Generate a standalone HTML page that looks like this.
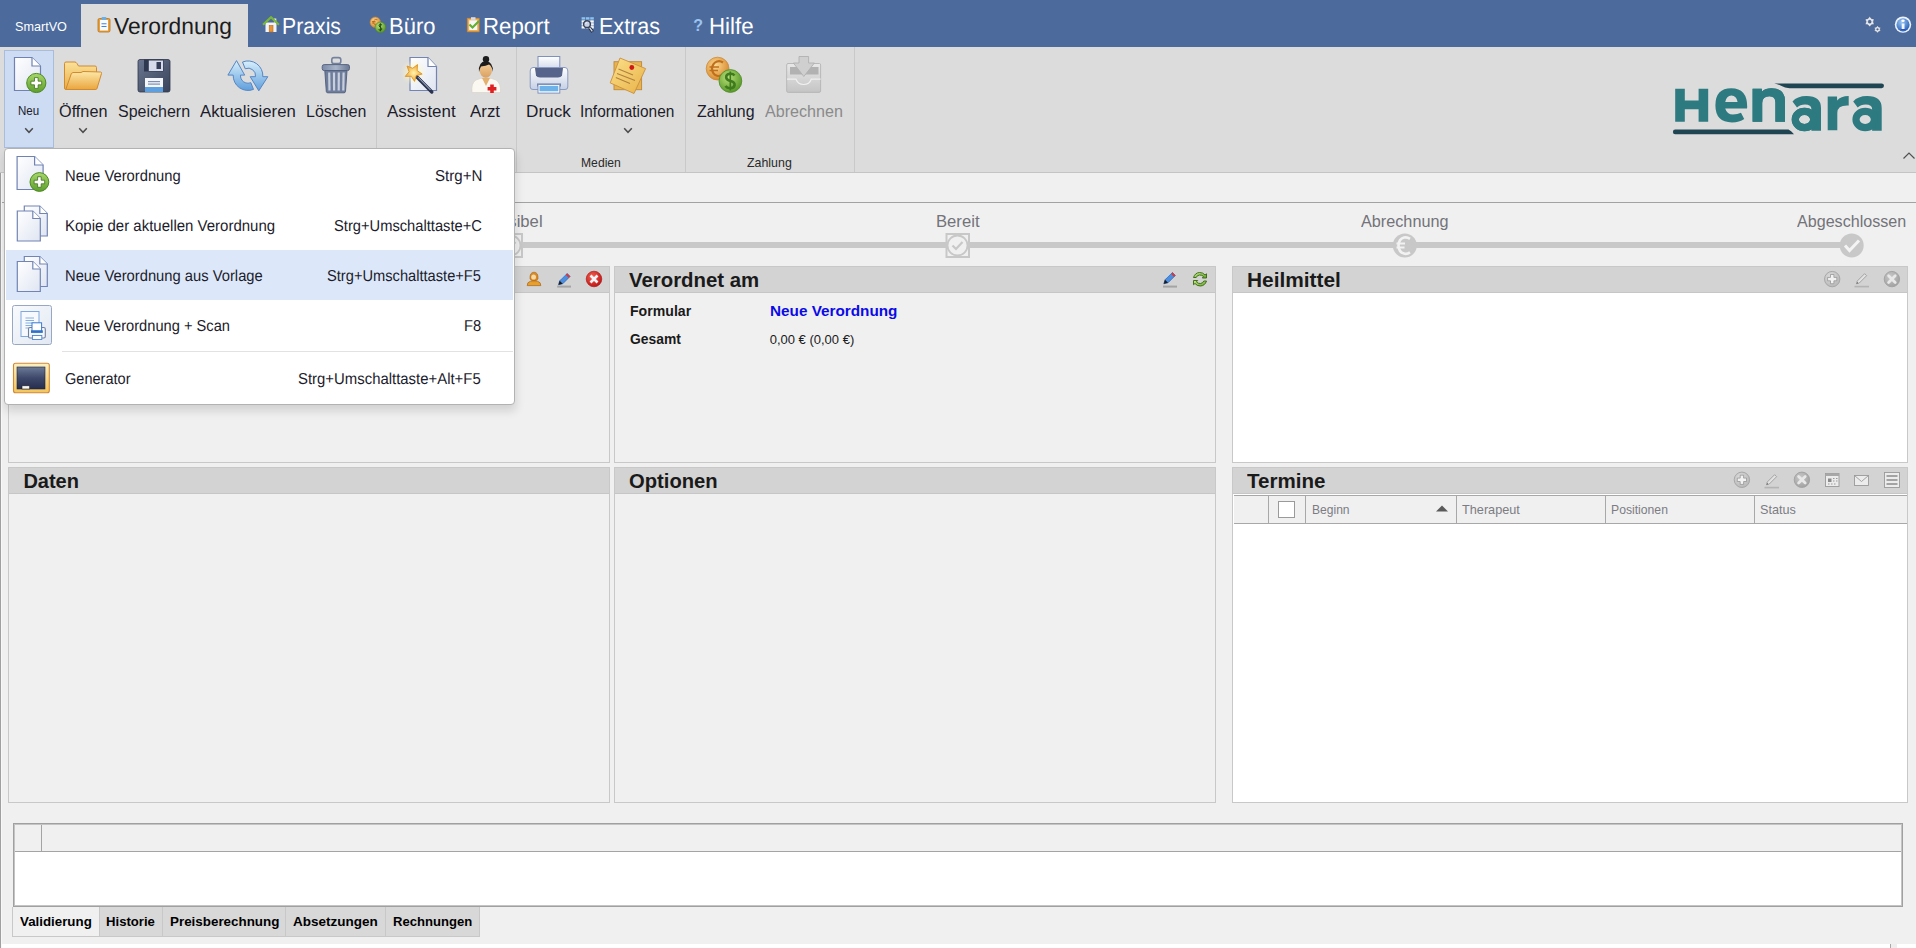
<!DOCTYPE html>
<html><head><meta charset="utf-8"><title>SmartVO</title>
<style>
html,body{margin:0;padding:0}
body{width:1916px;height:948px;overflow:hidden;position:relative;background:#f0f0f0;font-family:"Liberation Sans",sans-serif}
.a{position:absolute;box-sizing:border-box}
.t{position:absolute;font-family:"Liberation Sans",sans-serif;white-space:pre;transform-origin:0 0}
svg{position:absolute;overflow:visible}
</style></head><body>
<!-- top bar -->
<div class="a" style="left:0;top:0;width:1916px;height:47px;background:#4c6a9c"></div>
<div class="a" style="left:81px;top:4px;width:167px;height:43px;background:#dcdcdc"></div>
<!-- ribbon -->
<div class="a" style="left:0;top:47px;width:1916px;height:126px;background:#dcdcdc;border-bottom:1px solid #c4c4c4"></div>
<div class="a" style="left:4px;top:50px;width:50px;height:98px;background:#cddcf3;border:1px solid #a9bcda"></div>
<div class="a" style="left:376px;top:47px;width:1px;height:125px;background:#c9c9c9"></div>
<div class="a" style="left:516px;top:47px;width:1px;height:125px;background:#c9c9c9"></div>
<div class="a" style="left:685px;top:47px;width:1px;height:125px;background:#c9c9c9"></div>
<div class="a" style="left:854px;top:47px;width:1px;height:125px;background:#c9c9c9"></div>
<svg style="left:0;top:0" width="1916" height="948">
<defs>
 <linearGradient id="gPage" x1="0" y1="0" x2="1" y2="1"><stop offset="0" stop-color="#ffffff"/><stop offset="1" stop-color="#dfe5f2"/></linearGradient>
 <linearGradient id="gGreenR" x1="0" y1="0" x2="1" y2="1"><stop offset="0" stop-color="#c4ec86"/><stop offset="1" stop-color="#64a626"/></linearGradient><linearGradient id="gGreen" x1="0" y1="0" x2="0" y2="1"><stop offset="0" stop-color="#a8d86a"/><stop offset="1" stop-color="#5c9e2c"/></linearGradient>
 <linearGradient id="gFolderB" x1="0" y1="0" x2="0" y2="1"><stop offset="0" stop-color="#fbe29a"/><stop offset="1" stop-color="#e9ad45"/></linearGradient>
 <linearGradient id="gFolderF" x1="0" y1="0" x2="0" y2="1"><stop offset="0" stop-color="#fde7a8"/><stop offset="1" stop-color="#eaa63e"/></linearGradient>
 <linearGradient id="gFloppy" x1="0" y1="0" x2="1" y2="1"><stop offset="0" stop-color="#6a7690"/><stop offset="1" stop-color="#39435a"/></linearGradient>
 <linearGradient id="gBlueArr" x1="0" y1="0" x2="0" y2="1"><stop offset="0" stop-color="#d8effc"/><stop offset="1" stop-color="#5f9fdc"/></linearGradient>
 <linearGradient id="gTrash" x1="0" y1="0" x2="1" y2="0"><stop offset="0" stop-color="#7c8aa8"/><stop offset="0.5" stop-color="#a8b4c8"/><stop offset="1" stop-color="#6a7894"/></linearGradient>
 <radialGradient id="gStar" cx="0.5" cy="0.5" r="0.5"><stop offset="0" stop-color="#fff3b0"/><stop offset="1" stop-color="#f0a830"/></radialGradient>
 <radialGradient id="gGlow" cx="0.5" cy="0.5" r="0.5"><stop offset="0" stop-color="#fff7c0" stop-opacity="0.9"/><stop offset="1" stop-color="#fff7c0" stop-opacity="0"/></radialGradient>
 <linearGradient id="gSkin" x1="0" y1="0" x2="0" y2="1"><stop offset="0" stop-color="#f6d09a"/><stop offset="1" stop-color="#d9a060"/></linearGradient>
 <linearGradient id="gPrinter" x1="0" y1="0" x2="0" y2="1"><stop offset="0" stop-color="#ffffff"/><stop offset="1" stop-color="#c6d0e4"/></linearGradient>
 <linearGradient id="gNote" x1="0" y1="0" x2="1" y2="1"><stop offset="0" stop-color="#fbe08a"/><stop offset="1" stop-color="#e9b248"/></linearGradient>
 <radialGradient id="gEuro" cx="0.4" cy="0.35" r="0.65"><stop offset="0" stop-color="#fbd890"/><stop offset="1" stop-color="#d98a2e"/></radialGradient>
 <radialGradient id="gDollar" cx="0.4" cy="0.35" r="0.65"><stop offset="0" stop-color="#b8e078"/><stop offset="1" stop-color="#5a9a2a"/></radialGradient>
 <linearGradient id="gInbox" x1="0" y1="0" x2="0" y2="1"><stop offset="0" stop-color="#e8e8e8"/><stop offset="1" stop-color="#c4c4c4"/></linearGradient>
 <radialGradient id="gRed" cx="0.4" cy="0.35" r="0.65"><stop offset="0" stop-color="#f46050"/><stop offset="1" stop-color="#c01818"/></radialGradient>
 <radialGradient id="gGrayBtn" cx="0.4" cy="0.35" r="0.65"><stop offset="0" stop-color="#c8c8c8"/><stop offset="1" stop-color="#a2a2a2"/></radialGradient><radialGradient id="gGrayBtnL" cx="0.4" cy="0.35" r="0.65"><stop offset="0" stop-color="#dedede"/><stop offset="1" stop-color="#b8b8b8"/></radialGradient>
 <radialGradient id="gInfo" cx="0.4" cy="0.3" r="0.7"><stop offset="0" stop-color="#9cc8f4"/><stop offset="1" stop-color="#2a62b8"/></radialGradient>
 <linearGradient id="gBoard" x1="0" y1="0" x2="0" y2="1"><stop offset="0" stop-color="#6c7a98"/><stop offset="0.5" stop-color="#3e486a"/><stop offset="1" stop-color="#262e4e"/></linearGradient>
 <linearGradient id="gPerson" x1="0" y1="0" x2="0" y2="1"><stop offset="0" stop-color="#f8d890"/><stop offset="1" stop-color="#c87a18"/></linearGradient>
</defs><path d="M14.5,57.5 L32.0,57.5 L40.5,66.0 L40.5,90.5 L14.5,90.5Z" fill="url(#gPage)" stroke="#6f82b2" stroke-width="1.20"/><path d="M32.0,57.5 L32.0,66.0 L40.5,66.0" fill="#ffffff" stroke="#6f82b2" stroke-width="1.20"/><circle cx="36.3" cy="83" r="9.6" fill="url(#gGreen)" stroke="#4e8a24" stroke-width="1"/><path d="M34.476,77.624 h3.6479999999999997 v3.5520000000000005 h3.5520000000000005 v3.6479999999999997 h-3.5520000000000005 v3.5520000000000005 h-3.6479999999999997 v-3.5520000000000005 h-3.5520000000000005 v-3.6479999999999997 h3.5520000000000005Z" fill="#ffffff" stroke="#3f6e1e" stroke-width="0.8"/><path d="M64.5,63.5 Q64.5,62 66,62 L75,62 Q76,62 77,63.5 L78.5,66 L95,66 Q96.5,66 96.5,67.5 L96.5,88 Q96.5,89.5 95,89.5 L66,89.5 Q64.5,89.5 64.5,88Z" fill="url(#gFolderB)" stroke="#cf8a32" stroke-width="1"/><path d="M70.5,76 Q71,72.5 73,72.5 L81,72.5 L83,71.5 L100.5,72 Q102,72.2 101.5,73.5 L97,88.5 Q96.6,89.5 95.5,89.5 L67,89.5 Q65.8,89.5 66.2,88.3Z" fill="url(#gFolderF)" stroke="#d08a30" stroke-width="1"/><rect x="138" y="59.5" width="32" height="32.5" rx="2" fill="url(#gFloppy)" stroke="#2e374c" stroke-width="0.8"/><rect x="144" y="59.5" width="19.5" height="12" fill="#2e3850"/><rect x="148.8" y="60.5" width="14.2" height="10.5" fill="#d6dceb"/><rect x="156.5" y="62" width="4.5" height="7" fill="#34405a"/><rect x="145" y="78" width="18" height="14" fill="#f4f6fa"/><rect x="145" y="87" width="18" height="5" fill="#5e9fe0"/><rect x="148" y="81" width="12" height="1.2" fill="#7e8fb4"/><rect x="148" y="83.5" width="12" height="1.2" fill="#7e8fb4"/><path d="M236.5,60.6 L227.9,75.1 L233.2,75.1 A14.8,14.8 0 0 0 253.5,89.4 L250.8,82.65 A7.5,7.5 0 0 1 240.5,75.1 L244.7,75.1Z" fill="url(#gBlueArr)" stroke="#5586c4" stroke-width="1"/><path d="M258.8,90.8 L250.2,76.7 L255.5,76.7 A7.5,7.5 0 0 0 245.2,68.75 L242.5,62 A14.8,14.8 0 0 1 262.8,76.7 L267.8,76.7Z" fill="url(#gBlueArr)" stroke="#5586c4" stroke-width="1"/><rect x="331.8" y="57.6" width="9" height="6" rx="2.2" fill="none" stroke="#74829e" stroke-width="1.6"/><rect x="322.2" y="64.6" width="27.3" height="6" rx="2" fill="url(#gTrash)" stroke="#4f5c7a" stroke-width="0.9"/><path d="M324.8,70.6 L347,70.6 L345.5,91.5 Q345.3,92.8 344,92.8 L327.8,92.8 Q326.5,92.8 326.3,91.5Z" fill="#6f7d9c" stroke="#4f5c7a" stroke-width="0.9"/><path d="M329.2,72.5 L329.5,90.5" stroke="#c8d0de" stroke-width="2.2"/><path d="M334,72.5 L334.1,90.5" stroke="#c8d0de" stroke-width="2.2"/><path d="M338.8,72.5 L338.7,90.5" stroke="#c8d0de" stroke-width="2.2"/><path d="M343.6,72.5 L343.3,90.5" stroke="#c8d0de" stroke-width="2.2"/><path d="M410,57.5 L428,57.5 L436.5,66.5 L436.5,90.5 L410,90.5Z" fill="url(#gPage)" stroke="#7284b4" stroke-width="1.2"/><path d="M428,57.5 L428,66.5 L436.5,66.5" fill="#fff" stroke="#7284b4" stroke-width="1.2"/><circle cx="413.3" cy="72.5" r="13" fill="url(#gGlow)"/><path d="M416.5,76.5 L431.8,92" stroke="#2a3450" stroke-width="3.4" stroke-linecap="round"/><path d="M418,77.2 L430.5,90" stroke="#b8c4dc" stroke-width="1"/><path d="M417.54,64.56 L417.17,70.62 L422.16,74.07 L416.28,75.60 L414.54,81.41 L411.28,76.29 L405.21,76.43 L409.07,71.75 L407.06,66.02 L412.71,68.24Z" fill="url(#gStar)" stroke="#d98b20" stroke-width="0.8"/><path d="M472,92.5 Q471,83 476,80 Q480,78 486,78 Q492,78 496,80 Q501,83 500.5,92.5Z" fill="#fbf8f2" stroke="#d8d0c4" stroke-width="0.6"/><path d="M482,78 L486,86 L490,78Z" fill="#e3b070"/><ellipse cx="485.8" cy="70" rx="6.2" ry="7.8" fill="url(#gSkin)"/><path d="M479,72 Q478,62 485.8,61 Q493.5,62 492.8,72 Q492,66 489,64.5 Q486,66 481,66.5 Q479.6,69 479,72Z" fill="#1c1c1c"/><circle cx="486" cy="59.2" r="3.2" fill="#1c1c1c"/><path d="M490.2,84.5 h3.6 v2.6 h2.6 v3.4 h-2.6 v2.6 h-3.6 v-2.6 h-2.6 v-3.4 h2.6Z" fill="#e02020"/><rect x="538" y="56.5" width="21.8" height="16" fill="url(#gPrinter)" stroke="#7e90bc" stroke-width="1"/><path d="M533,67.5 L565,67.5 Q567.8,67.5 567.8,71 L567.8,87 Q567.8,89.5 565,89.5 L533,89.5 Q530.2,89.5 530.2,87 L530.2,71 Q530.2,67.5 533,67.5Z" fill="url(#gPrinter)" stroke="#8a9ac0" stroke-width="1"/><path d="M535,68 L563,68 L562,75.5 Q561,77.5 558,77.5 L540,77.5 Q537,77.5 536,75.5Z" fill="#56638a"/><rect x="537" y="83.5" width="24" height="3" fill="#6a7aa6"/><rect x="538" y="84.5" width="21.8" height="8.6" fill="#ffffff" stroke="#7e90bc" stroke-width="1"/><rect x="539.5" y="85.8" width="18.8" height="5.5" fill="#6eb2ea"/><rect x="614" y="61.7" width="27.6" height="28" fill="#e8b450" stroke="#c08838" stroke-width="0.9"/><path d="M620,58 L645.6,68.6 L634,93.5 L610.2,82.9Z" fill="url(#gNote)" stroke="#c8903e" stroke-width="0.9"/><path d="M618.5,69 L633,75 M617,73.5 L635,80.5 M615.8,77.5 L630,83.5" stroke="#b08040" stroke-width="1.1"/><circle cx="631.8" cy="67.5" r="2.4" fill="#d01818"/><circle cx="717.6" cy="68.6" r="11.4" fill="url(#gEuro)" stroke="#c88a40" stroke-width="0.8"/><path d="M723,62.5 Q720,60.5 717,61.5 Q712.5,63 712,68.6 Q712.5,74.5 717,75.8 Q720,76.6 723,74.5" fill="none" stroke="#c0701c" stroke-width="2.2"/><path d="M709.5,67 L719,67 M709.5,70.5 L718,70.5" stroke="#c0701c" stroke-width="1.6"/><circle cx="730.4" cy="81" r="11.4" fill="url(#gDollar)" stroke="#4f8a28" stroke-width="0.8"/><path d="M734.5,75.5 Q733,73.5 730,73.8 Q726,74.2 726.2,77.5 Q726.5,80 730.5,81 Q734.8,82 734.6,85 Q734.2,88.3 730,88.2 Q726.8,88 725.5,86" fill="none" stroke="#3f7a1e" stroke-width="2.6"/><path d="M730.3,71.5 L730.3,90.5" stroke="#3f7a1e" stroke-width="1.6"/><path d="M788,63.5 L819.5,63.5 Q820.6,63.5 820.6,65 L820.6,91 Q820.6,92.4 819,92.4 L788.3,92.4 Q786.7,92.4 786.7,91 L786.7,65 Q786.7,63.5 788,63.5Z" fill="url(#gInbox)" stroke="#b4b4b4" stroke-width="0.9"/><rect x="790" y="67" width="28.5" height="7.5" fill="#b2b2b2"/><path d="M787,79.2 L796,79.2 Q798,84.5 803.6,84.5 Q809.5,84.5 811.2,79.2 L820.6,79.2" fill="none" stroke="#f0f0f0" stroke-width="1.2"/><path d="M799,56.5 L808.6,56.5 L808.6,63 L814.4,63 L803.8,76.5 L793.4,63 L799,63Z" fill="#cfcfcf" stroke="#b0b0b0" stroke-width="0.9"/><path d="M25.2,128.3 L29,132.3 L32.8,128.3" fill="none" stroke="#4c4c4c" stroke-width="1.5"/><path d="M79.2,128.3 L83,132.3 L86.8,128.3" fill="none" stroke="#4c4c4c" stroke-width="1.5"/><path d="M624.2,128.3 L628,132.3 L631.8,128.3" fill="none" stroke="#4c4c4c" stroke-width="1.5"/><path d="M1903.5,158.5 L1909,153 L1914.5,158.5" fill="none" stroke="#505050" stroke-width="1.2"/></svg>
<svg style="left:0;top:0" width="1916" height="60"><rect x="98" y="18.5" width="12" height="13.5" rx="1.5" fill="#e9a23a" stroke="#b86e1a" stroke-width="0.8"/><rect x="100" y="20" width="8" height="10.5" fill="#fafbfe"/><rect x="101.5" y="17" width="5" height="3" rx="1" fill="#6aaee6"/><path d="M101.5,23.8 h5 M101.5,26.5 h5" stroke="#3f86d6" stroke-width="1.1"/><rect x="265.5" y="22.5" width="11" height="9.5" fill="#eef2fa"/><rect x="274" y="18.5" width="2.3" height="4" fill="#e6ecf6"/><path d="M263,24.8 L271,17.2 L279,24.8" fill="none" stroke="#7ab832" stroke-width="2.2"/><rect x="269.2" y="25.5" width="3.8" height="6.5" fill="#e89434" stroke="#b86a1a" stroke-width="0.6"/><circle cx="375.3" cy="22.2" r="5.2" fill="url(#gEuro)" stroke="#c88a40" stroke-width="0.6"/><path d="M377.5,19.8 Q374,18.8 373.2,22.2 Q374,25.6 377.5,24.6 M372,21.5 h3.5 M372,23 h3.5" fill="none" stroke="#b86a1a" stroke-width="0.9"/><circle cx="380.4" cy="27.3" r="5.3" fill="url(#gDollar)" stroke="#4f8a28" stroke-width="0.6"/><path d="M382,25 Q380.5,24 379.2,24.8 Q378.2,26 380.4,27.3 Q382.6,28.4 381.6,29.8 Q380.2,30.7 378.6,29.6 M380.4,23.3 v8" fill="none" stroke="#1f4a10" stroke-width="1"/><rect x="467.3" y="18.3" width="11.8" height="13.5" fill="#f0b050" stroke="#d08430" stroke-width="0.8"/><rect x="469.2" y="20.3" width="8" height="9.7" fill="#f4f6fa"/><rect x="471" y="17.2" width="4.5" height="2.6" fill="#d8dce6"/><path d="M469.5,24.5 L472.5,27.5 L479,21" fill="none" stroke="#62b030" stroke-width="2.2"/><rect x="581.2" y="17" width="12.6" height="11.8" fill="#4a6a9c"/><rect x="581.6" y="17.2" width="3.6" height="2.4" fill="#8cc2f0"/><rect x="581.6" y="20.3" width="3.6" height="2.4" fill="#f6f8fc"/><rect x="581.6" y="23.2" width="3.6" height="2.4" fill="#f6f8fc"/><rect x="581.6" y="26.1" width="3.6" height="2.4" fill="#f6f8fc"/><rect x="585.9" y="17.2" width="3.6" height="2.4" fill="#8cc2f0"/><rect x="585.9" y="20.3" width="3.6" height="2.4" fill="#f6f8fc"/><rect x="585.9" y="23.2" width="3.6" height="2.4" fill="#f6f8fc"/><rect x="585.9" y="26.1" width="3.6" height="2.4" fill="#f6f8fc"/><rect x="590.2" y="17.2" width="3.6" height="2.4" fill="#8cc2f0"/><rect x="590.2" y="20.3" width="3.6" height="2.4" fill="#f6f8fc"/><rect x="590.2" y="23.2" width="3.6" height="2.4" fill="#f6f8fc"/><rect x="590.2" y="26.1" width="3.6" height="2.4" fill="#f6f8fc"/><path d="M589.5,27.5 L592.6,31.8" stroke="#202838" stroke-width="3"/><path d="M589.6,27.6 L592.3,31.4" stroke="#d0d8ea" stroke-width="1.4"/><circle cx="587" cy="24.2" r="3.4" fill="#c8d2e6" stroke="#3a4258" stroke-width="1.5"/><path d="M585.6,23.8 Q586,22.6 587.2,22.4" stroke="#f4f6fa" stroke-width="1" fill="none"/><text x="693.2" y="30.8" font-family="Liberation Sans" font-weight="bold" font-size="16" fill="#9cc4ee">?</text><path d="M1869.70,16.60 L1871.45,18.67 L1874.12,19.15 L1873.20,21.70 L1874.12,24.25 L1871.45,24.73 L1869.70,26.80 L1867.95,24.73 L1865.28,24.25 L1866.20,21.70 L1865.28,19.15 L1867.95,18.67Z M1871.3,21.7 A1.6,1.6 0 1 0 1868.1000000000001,21.7 A1.6,1.6 0 1 0 1871.3,21.7Z" fill="#e4e8f0" fill-rule="evenodd" stroke="#3a4a66" stroke-width="0.5" stroke-opacity="0.6"/><path d="M1877.50,25.70 L1878.75,27.13 L1880.62,27.50 L1880.00,29.30 L1880.62,31.10 L1878.75,31.47 L1877.50,32.90 L1876.25,31.47 L1874.38,31.10 L1875.00,29.30 L1874.38,27.50 L1876.25,27.13Z M1878.4,29.3 A0.9,0.9 0 1 0 1876.6,29.3 A0.9,0.9 0 1 0 1878.4,29.3Z" fill="#e4e8f0" fill-rule="evenodd" stroke="#3a4a66" stroke-width="0.5" stroke-opacity="0.6"/><circle cx="1903" cy="24.6" r="8.2" fill="#eef2fa"/><circle cx="1903" cy="24.8" r="6.6" fill="url(#gInfo)"/><rect x="1901.7" y="23.5" width="2.8" height="6" fill="#f4f8ff"/><rect x="1900.8" y="29" width="4.6" height="1" fill="#3050c0"/><ellipse cx="1903" cy="20.8" rx="1.7" ry="1.2" fill="#fff"/></svg>
<svg style="left:0;top:0" width="1916" height="200"><path d="M1774.2,83.4 L1881.6,83.4 A2.4,2.4 0 0 1 1881.6,88.2 L1789.5,88.2 Q1785,88.2 1781,85.8 Q1778,83.9 1774.2,83.4Z" fill="#1f4553"/><path d="M1675.2,129.6 L1788.5,129.6 Q1791.5,131.2 1794,134.2 L1675.2,134.2 A2.3,2.3 0 0 1 1675.2,129.6Z" fill="#1f4553"/><path d="M1675.2,88.8 h9.6 v11.6 h13.8 v-11.6 h9.6 v33 h-9.6 v-12.6 h-13.8 v12.6 h-9.6Z" fill="#2d7a80"/><path d="M1747.2,106.8 Q1747.2,88.2 1731.3,88.2 Q1715.4,88.2 1715.4,105.3 Q1715.4,122.4 1732,122.4 Q1739.5,122.4 1744.2,119 L1741,112.8 Q1737.5,114.6 1733,114.6 Q1727,114.6 1725.2,108.6 L1747,108.6 Q1747.2,107.6 1747.2,106.8Z M1725.2,102 Q1726.5,95.5 1731.4,95.5 Q1736.5,95.5 1737.6,102Z" fill="#2d7a80" fill-rule="evenodd"/><path d="M1752.6,88.8 L1761.8,88.8 L1762,91.5 Q1765.5,88.2 1771.5,88.2 Q1785,88.2 1785,101 L1785,121.8 L1775.4,121.8 L1775.4,102.5 Q1775.4,96.2 1769.5,96.2 Q1762.2,96.2 1762.2,103 L1762.2,121.8 L1752.6,121.8Z" fill="#2d7a80" stroke="#dcdcdc" stroke-width="1.6" paint-order="stroke"/><path d="M1752.6,88.8 L1761.8,88.8 L1762,91.5 Q1765.5,88.2 1771.5,88.2 Q1785,88.2 1785,101 L1785,121.8 L1775.4,121.8 L1775.4,102.5 Q1775.4,96.2 1769.5,96.2 Q1762.2,96.2 1762.2,103 L1762.2,121.8 L1752.6,121.8Z" fill="#2d7a80"/><g stroke="#dcdcdc" stroke-width="1.8"><path d="M1811.4,130.8 L1821,130.8 L1821,108 Q1821,96 1806.5,96 Q1797,96 1792.5,101.5 L1797,107.5 Q1800,104.5 1805,104.5 Q1811.4,104.5 1811.4,109Z" fill="#2d7a80" stroke="#dcdcdc" stroke-width="1.8"/><ellipse cx="1804.5" cy="119.5" rx="9.2" ry="8.1" fill="none" stroke="#2d7a80" stroke-width="7.2"/></g><path d="M1811.4,130.8 L1821,130.8 L1821,108 Q1821,96 1806.5,96 Q1797,96 1792.5,101.5 L1797,107.5 Q1800,104.5 1805,104.5 Q1811.4,104.5 1811.4,109Z" fill="#2d7a80"/><ellipse cx="1804.5" cy="119.5" rx="9.2" ry="8.1" fill="none" stroke="#2d7a80" stroke-width="7.2"/><path d="M1827.7,96.6 L1837,96.6 L1837.2,100.5 Q1840.5,96 1848.7,96 L1848.7,105.6 Q1837.3,105 1837.3,113 L1837.3,130.2 L1827.7,130.2Z" fill="#2d7a80"/><path d="M1872.1000000000001,130.8 L1881.7,130.8 L1881.7,108 Q1881.7,96 1867.2,96 Q1857.7,96 1853.2,101.5 L1857.7,107.5 Q1860.7,104.5 1865.7,104.5 Q1872.1000000000001,104.5 1872.1000000000001,109Z" fill="#2d7a80"/><ellipse cx="1865.2" cy="119.5" rx="9.2" ry="8.1" fill="none" stroke="#2d7a80" stroke-width="7.2"/></svg>
<!-- area below ribbon -->
<div class="a" style="left:0;top:202px;width:1916px;height:1px;background:#a2a2a2"></div>
<div class="a" style="left:0;top:173px;width:1px;height:775px;background:#a0a0a0"></div>
<div class="a" style="left:1px;top:173px;width:1px;height:775px;background:#f8f8f8"></div>
<!-- progress -->
<div class="a" style="left:510px;top:242px;width:1342px;height:6px;background:#c8c8c8"></div>
<svg style="left:0;top:0" width="1916" height="300"><rect x="499.5" y="234" width="22.5" height="23" fill="#f0f0f0" stroke="#c8c8c8" stroke-width="2"/><circle cx="510.5" cy="245.5" r="10" fill="#f0f0f0" stroke="#c8c8c8" stroke-width="1.8"/><path d="M505.5,245.5 L509.0,249 L515.5,242" fill="none" stroke="#c8c8c8" stroke-width="2.2"/><rect x="946.5" y="234" width="22.5" height="23" fill="#f0f0f0" stroke="#c8c8c8" stroke-width="2"/><circle cx="957.5" cy="245.5" r="10" fill="#f0f0f0" stroke="#c8c8c8" stroke-width="1.8"/><path d="M952.5,245.5 L956.0,249 L962.5,242" fill="none" stroke="#c8c8c8" stroke-width="2.2"/><circle cx="1404.8" cy="245.6" r="12" fill="#c8c8c8"/><path d="M1410,238.8 Q1407,236.8 1404,237.6 Q1398.8,239 1398.5,245.6 Q1398.8,252.2 1404,253.6 Q1407,254.4 1410,252.4" fill="none" stroke="#f2f2f2" stroke-width="2.6"/><path d="M1396.5,243.5 h8.5 M1396.5,247.5 h8" stroke="#f2f2f2" stroke-width="2"/><circle cx="1851.7" cy="245.5" r="12" fill="#c8c8c8"/><path d="M1845,245.5 L1849.5,250.5 L1859,240.5" fill="none" stroke="#f4f4f4" stroke-width="3"/></svg>
<!-- panels row 1 -->
<div class="a" style="left:8px;top:266px;width:602px;height:197px;background:#f0f0f0;border:1px solid #c8c8c8"></div>
<div class="a" style="left:9px;top:267px;width:600px;height:26px;background:#d3d3d3;border-bottom:1px solid #c6c6c6"></div>
<div class="a" style="left:614px;top:266px;width:602px;height:197px;background:#f0f0f0;border:1px solid #c8c8c8"></div>
<div class="a" style="left:615px;top:267px;width:600px;height:26px;background:#d3d3d3;border-bottom:1px solid #c6c6c6"></div>
<div class="a" style="left:1232px;top:266px;width:676px;height:197px;background:#ffffff;border:1px solid #c8c8c8"></div>
<div class="a" style="left:1233px;top:267px;width:674px;height:26px;background:#d3d3d3;border-bottom:1px solid #c6c6c6"></div>
<!-- panels row 2 -->
<div class="a" style="left:8px;top:467px;width:602px;height:336px;background:#f0f0f0;border:1px solid #c8c8c8"></div>
<div class="a" style="left:9px;top:468px;width:600px;height:26px;background:#d3d3d3;border-bottom:1px solid #c6c6c6"></div>
<div class="a" style="left:614px;top:467px;width:602px;height:336px;background:#f0f0f0;border:1px solid #c8c8c8"></div>
<div class="a" style="left:615px;top:468px;width:600px;height:26px;background:#d3d3d3;border-bottom:1px solid #c6c6c6"></div>
<div class="a" style="left:1232px;top:467px;width:676px;height:336px;background:#ffffff;border:1px solid #c8c8c8"></div>
<div class="a" style="left:1233px;top:468px;width:674px;height:26px;background:#d3d3d3;border-bottom:1px solid #c6c6c6"></div>
<!-- termine grid header -->
<div class="a" style="left:1234px;top:495px;width:673px;height:29px;background:#f0f0f0;border-top:1px solid #a8a8a8;border-bottom:1px solid #a8a8a8"></div>
<div class="a" style="left:1268px;top:496px;width:1px;height:27px;background:#a8a8a8"></div>
<div class="a" style="left:1305px;top:496px;width:1px;height:27px;background:#a8a8a8"></div>
<div class="a" style="left:1456px;top:496px;width:1px;height:27px;background:#a8a8a8"></div>
<div class="a" style="left:1605px;top:496px;width:1px;height:27px;background:#a8a8a8"></div>
<div class="a" style="left:1754px;top:496px;width:1px;height:27px;background:#a8a8a8"></div>
<div class="a" style="left:1278px;top:501px;width:17px;height:17px;background:#fff;border:1px solid #9a9a9a"></div>
<svg style="left:1436px;top:505px" width="12" height="7"><path d="M0,6.5 L6,0.5 L12,6.5Z" fill="#5a5a5a"/></svg>
<svg style="left:0;top:0" width="1916" height="948">
<defs>
 <linearGradient id="gPage" x1="0" y1="0" x2="1" y2="1"><stop offset="0" stop-color="#ffffff"/><stop offset="1" stop-color="#dfe5f2"/></linearGradient>
 <linearGradient id="gGreenR" x1="0" y1="0" x2="1" y2="1"><stop offset="0" stop-color="#c4ec86"/><stop offset="1" stop-color="#64a626"/></linearGradient><linearGradient id="gGreen" x1="0" y1="0" x2="0" y2="1"><stop offset="0" stop-color="#a8d86a"/><stop offset="1" stop-color="#5c9e2c"/></linearGradient>
 <linearGradient id="gFolderB" x1="0" y1="0" x2="0" y2="1"><stop offset="0" stop-color="#fbe29a"/><stop offset="1" stop-color="#e9ad45"/></linearGradient>
 <linearGradient id="gFolderF" x1="0" y1="0" x2="0" y2="1"><stop offset="0" stop-color="#fde7a8"/><stop offset="1" stop-color="#eaa63e"/></linearGradient>
 <linearGradient id="gFloppy" x1="0" y1="0" x2="1" y2="1"><stop offset="0" stop-color="#6a7690"/><stop offset="1" stop-color="#39435a"/></linearGradient>
 <linearGradient id="gBlueArr" x1="0" y1="0" x2="0" y2="1"><stop offset="0" stop-color="#d8effc"/><stop offset="1" stop-color="#5f9fdc"/></linearGradient>
 <linearGradient id="gTrash" x1="0" y1="0" x2="1" y2="0"><stop offset="0" stop-color="#7c8aa8"/><stop offset="0.5" stop-color="#a8b4c8"/><stop offset="1" stop-color="#6a7894"/></linearGradient>
 <radialGradient id="gStar" cx="0.5" cy="0.5" r="0.5"><stop offset="0" stop-color="#fff3b0"/><stop offset="1" stop-color="#f0a830"/></radialGradient>
 <radialGradient id="gGlow" cx="0.5" cy="0.5" r="0.5"><stop offset="0" stop-color="#fff7c0" stop-opacity="0.9"/><stop offset="1" stop-color="#fff7c0" stop-opacity="0"/></radialGradient>
 <linearGradient id="gSkin" x1="0" y1="0" x2="0" y2="1"><stop offset="0" stop-color="#f6d09a"/><stop offset="1" stop-color="#d9a060"/></linearGradient>
 <linearGradient id="gPrinter" x1="0" y1="0" x2="0" y2="1"><stop offset="0" stop-color="#ffffff"/><stop offset="1" stop-color="#c6d0e4"/></linearGradient>
 <linearGradient id="gNote" x1="0" y1="0" x2="1" y2="1"><stop offset="0" stop-color="#fbe08a"/><stop offset="1" stop-color="#e9b248"/></linearGradient>
 <radialGradient id="gEuro" cx="0.4" cy="0.35" r="0.65"><stop offset="0" stop-color="#fbd890"/><stop offset="1" stop-color="#d98a2e"/></radialGradient>
 <radialGradient id="gDollar" cx="0.4" cy="0.35" r="0.65"><stop offset="0" stop-color="#b8e078"/><stop offset="1" stop-color="#5a9a2a"/></radialGradient>
 <linearGradient id="gInbox" x1="0" y1="0" x2="0" y2="1"><stop offset="0" stop-color="#e8e8e8"/><stop offset="1" stop-color="#c4c4c4"/></linearGradient>
 <radialGradient id="gRed" cx="0.4" cy="0.35" r="0.65"><stop offset="0" stop-color="#f46050"/><stop offset="1" stop-color="#c01818"/></radialGradient>
 <radialGradient id="gGrayBtn" cx="0.4" cy="0.35" r="0.65"><stop offset="0" stop-color="#c8c8c8"/><stop offset="1" stop-color="#a2a2a2"/></radialGradient><radialGradient id="gGrayBtnL" cx="0.4" cy="0.35" r="0.65"><stop offset="0" stop-color="#dedede"/><stop offset="1" stop-color="#b8b8b8"/></radialGradient>
 <radialGradient id="gInfo" cx="0.4" cy="0.3" r="0.7"><stop offset="0" stop-color="#9cc8f4"/><stop offset="1" stop-color="#2a62b8"/></radialGradient>
 <linearGradient id="gBoard" x1="0" y1="0" x2="0" y2="1"><stop offset="0" stop-color="#6c7a98"/><stop offset="0.5" stop-color="#3e486a"/><stop offset="1" stop-color="#262e4e"/></linearGradient>
 <linearGradient id="gPerson" x1="0" y1="0" x2="0" y2="1"><stop offset="0" stop-color="#f8d890"/><stop offset="1" stop-color="#c87a18"/></linearGradient>
</defs><path d="M527.2,285.6 Q527,282.2 530.5,281.2 L537.5,281.2 Q541,282.2 540.8,285.6Z" fill="#e8a02c" stroke="#a86214" stroke-width="0.7"/><rect x="531.6" y="279.2" width="4.8" height="3" fill="#d88a24"/><path d="M530,279 Q529.6,272.2 534,272.2 Q538.4,272.2 538,279 Q537,280.6 534,280.6 Q531,280.6 530,279Z" fill="#d98a22" stroke="#a86214" stroke-width="0.6"/><ellipse cx="533.6" cy="277" rx="2.4" ry="2.6" fill="#f6d9a4"/><path d="M559.7,280.8 L567.1,273.4 L570.1,276.4 L562.7,283.8 L558.5,284.8Z" fill="#4c8ee0" stroke="#2d5fae" stroke-width="0.7"/><path d="M565.7,274.8 L567.1,273.4 L570.1,276.4 L568.7,277.8Z" fill="#e23434"/><path d="M560.7,278.8 L566.5,273.0" stroke="#bcd8f8" stroke-width="0.8"/><path d="M558.5,284.8 L559.7,280.8 L562.7,283.8Z" fill="#1c1c1c"/><rect x="557.2" y="285.6" width="13.8" height="2" fill="#a4a4a4"/><circle cx="594" cy="279" r="7.8" fill="url(#gRed)" stroke="#a81010" stroke-width="0.6"/><path d="M590.5,275.5 L597.5,282.5 M597.5,275.5 L590.5,282.5" stroke="#f4f4f8" stroke-width="2.6"/><path d="M1165.0,279.8 L1172.3999999999999,272.4 L1175.3999999999999,275.4 L1168.0,282.8 L1163.8,283.8Z" fill="#4c8ee0" stroke="#2d5fae" stroke-width="0.7"/><path d="M1171.0,273.8 L1172.3999999999999,272.4 L1175.3999999999999,275.4 L1174.0,276.8Z" fill="#e23434"/><path d="M1166.0,277.8 L1171.8,272.0" stroke="#bcd8f8" stroke-width="0.8"/><path d="M1163.8,283.8 L1165.0,279.8 L1168.0,282.8Z" fill="#1c1c1c"/><rect x="1163" y="285.6" width="14" height="2" fill="#a4a4a4"/><path d="M1193.5,277.5 Q1195,272.8 1199.5,272.5 Q1203,272.4 1205,275 L1206.5,273.8 L1206.5,278 L1202.3,278 L1203.6,276.6 Q1202,274.8 1199.5,275 Q1197,275.3 1196.2,277.5Z" fill="url(#gGreenR)" stroke="#35620e" stroke-width="0.9"/><path d="M1206.5,281 Q1205,285.7 1200.5,286 Q1197,286.1 1195,283.5 L1193.5,284.7 L1193.5,280.5 L1197.7,280.5 L1196.4,281.9 Q1198,283.7 1200.5,283.5 Q1203,283.2 1203.8,281Z" fill="url(#gGreenR)" stroke="#35620e" stroke-width="0.9"/><circle cx="1832.2" cy="279.1" r="7.7" fill="url(#gGrayBtnL)" stroke="#a4a4a4" stroke-width="0.9"/><path d="M1830.5,274.5 h3.4 v2.9 h2.9 v3.4 h-2.9 v2.9 h-3.4 v-2.9 h-2.9 v-3.4 h2.9Z" fill="#f2f2f2" stroke="#8c8c8c" stroke-width="0.7"/><path d="M1857.2,281.1 L1864.6,273.7 L1866.6,275.7 L1859.2,283.1 L1856.5,283.8Z" fill="#e2e2e2" stroke="#969696" stroke-width="0.8"/><path d="M1856.5,283.8 L1857.2,282.1 L1858.2,283.1Z" fill="#555"/><rect x="1854.5" y="285.8" width="14.5" height="1.6" fill="#b4b4b4"/><circle cx="1891.9" cy="279.1" r="7.7" fill="url(#gGrayBtn)" stroke="#a0a0a0" stroke-width="0.9"/><path d="M1888.6000000000001,275.8 L1895.2,282.40000000000003 M1895.2,275.8 L1888.6000000000001,282.40000000000003" stroke="#e8e8e8" stroke-width="2.8" stroke-linecap="round"/><circle cx="1741.9" cy="479.8" r="7.7" fill="url(#gGrayBtnL)" stroke="#a4a4a4" stroke-width="0.9"/><path d="M1740.2,475.2 h3.4 v2.9 h2.9 v3.4 h-2.9 v2.9 h-3.4 v-2.9 h-2.9 v-3.4 h2.9Z" fill="#f2f2f2" stroke="#8c8c8c" stroke-width="0.7"/><path d="M1767.2,482.1 L1774.6,474.7 L1776.6,476.7 L1769.2,484.1 L1766.5,484.8Z" fill="#e2e2e2" stroke="#969696" stroke-width="0.8"/><path d="M1766.5,484.8 L1767.2,483.1 L1768.2,484.1Z" fill="#555"/><rect x="1764.5" y="486.8" width="14.5" height="1.6" fill="#b4b4b4"/><circle cx="1801.9" cy="479.8" r="7.7" fill="url(#gGrayBtn)" stroke="#a0a0a0" stroke-width="0.9"/><path d="M1798.6000000000001,476.5 L1805.2,483.1 M1805.2,476.5 L1798.6000000000001,483.1" stroke="#e8e8e8" stroke-width="2.8" stroke-linecap="round"/><rect x="1825.5" y="473.5" width="13.5" height="13" fill="#ececec" stroke="#9a9a9a" stroke-width="0.9"/><rect x="1825.5" y="473.5" width="13.5" height="2.5" fill="#a8a8a8"/><rect x="1828" y="478.5" width="3.5" height="3.5" fill="#8a8a8a"/><path d="M1833,478.5 h1.5 M1836,478.5 h1.5 M1833,481 h1.5 M1836,481 h1.5 M1828,484 h1.5 M1831,484 h1.5 M1834,484 h1.5" stroke="#9a9a9a" stroke-width="1"/><rect x="1854.5" y="475.5" width="14" height="10" fill="#ececec" stroke="#9a9a9a" stroke-width="0.9"/><path d="M1854.5,475.5 L1861.5,481.5 L1868.5,475.5" fill="none" stroke="#9a9a9a" stroke-width="0.9"/><rect x="1884.5" y="472.5" width="15" height="15" fill="#ececec" stroke="#9a9a9a" stroke-width="0.9"/><path d="M1886.5,476 h11 M1886.5,480 h11 M1886.5,484 h11" stroke="#8a8a8a" stroke-width="1.6"/></svg>
<!-- bottom grid -->
<div class="a" style="left:13px;top:823px;width:1890px;height:84px;background:#fff;border:1px solid #a0a0a0;box-shadow:inset 1px 1px 0 #c4c4c4, inset -1px -1px 0 #c4c4c4"></div>
<div class="a" style="left:15px;top:825px;width:1886px;height:27px;background:#f0f0f0;border-bottom:1px solid #a4a4a4"></div>
<div class="a" style="left:41px;top:825px;width:1px;height:26px;background:#a4a4a4"></div>
<!-- bottom tabs -->
<div class="a" style="left:12px;top:907px;width:88px;height:30px;background:#f0f0f0;border:1px solid #c8c8c8;border-top:none"></div>
<div class="a" style="left:99px;top:907px;width:64px;height:30px;background:#d8d8d8;border:1px solid #c8c8c8;border-top:none"></div>
<div class="a" style="left:162px;top:907px;width:124px;height:30px;background:#d8d8d8;border:1px solid #c8c8c8;border-top:none"></div>
<div class="a" style="left:285px;top:907px;width:101px;height:30px;background:#d8d8d8;border:1px solid #c8c8c8;border-top:none"></div>
<div class="a" style="left:385px;top:907px;width:95px;height:30px;background:#d8d8d8;border:1px solid #c8c8c8;border-top:none"></div>
<div class="a" style="left:2px;top:944px;width:1914px;height:4px;background:#ffffff"></div>
<div class="a" style="left:1890px;top:944px;width:1px;height:4px;background:#a8a8a8"></div><div class="a" style="left:1891px;top:944px;width:6px;height:4px;background:#eeeeee"></div>
<!-- texts -->
<div class='t' style='left:14.50px;top:20px;font-size:13px;line-height:13px;font-weight:400;color:#ffffff;transform:scaleX(0.9717);'>SmartVO</div>
<div class='t' style='left:114.30px;top:15px;font-size:23.3px;line-height:23.3px;font-weight:400;color:#1c1c1c;transform:scaleX(0.9792);text-rendering:geometricPrecision;'>Verordnung</div>
<div class='t' style='left:281.69px;top:15px;font-size:23.3px;line-height:23.3px;font-weight:400;color:#ffffff;transform:scaleX(0.9111);text-rendering:geometricPrecision;'>Praxis</div>
<div class='t' style='left:388.76px;top:15px;font-size:23.3px;line-height:23.3px;font-weight:400;color:#ffffff;transform:scaleX(0.9438);text-rendering:geometricPrecision;'>Büro</div>
<div class='t' style='left:483.25px;top:15px;font-size:23.3px;line-height:23.3px;font-weight:400;color:#ffffff;transform:scaleX(0.9536);text-rendering:geometricPrecision;'>Report</div>
<div class='t' style='left:598.78px;top:15px;font-size:23.3px;line-height:23.3px;font-weight:400;color:#ffffff;transform:scaleX(0.9246);text-rendering:geometricPrecision;'>Extras</div>
<div class='t' style='left:708.94px;top:15px;font-size:23.3px;line-height:23.3px;font-weight:400;color:#ffffff;transform:scaleX(0.9556);text-rendering:geometricPrecision;'>Hilfe</div>
<div class='t' style='left:18.10px;top:104px;font-size:13px;line-height:13px;font-weight:400;color:#1c1c2c;transform:scaleX(0.8875);'>Neu</div>
<div class='t' style='left:59.20px;top:103px;font-size:16.5px;line-height:16.5px;font-weight:400;color:#1c1c2c;transform:scaleX(0.9837);'>Öffnen</div>
<div class='t' style='left:118.00px;top:103px;font-size:16.5px;line-height:16.5px;font-weight:400;color:#1c1c2c;transform:scaleX(0.9703);'>Speichern</div>
<div class='t' style='left:200.40px;top:103px;font-size:16.5px;line-height:16.5px;font-weight:400;color:#1c1c2c;transform:scaleX(1.0138);'>Aktualisieren</div>
<div class='t' style='left:305.63px;top:103px;font-size:16.5px;line-height:16.5px;font-weight:400;color:#1c1c2c;transform:scaleX(0.9672);'>Löschen</div>
<div class='t' style='left:387.30px;top:103px;font-size:16.5px;line-height:16.5px;font-weight:400;color:#1c1c2c;transform:scaleX(1.0254);'>Assistent</div>
<div class='t' style='left:470.20px;top:103px;font-size:16.5px;line-height:16.5px;font-weight:400;color:#1c1c2c;transform:scaleX(1.0233);'>Arzt</div>
<div class='t' style='left:525.96px;top:103px;font-size:16.5px;line-height:16.5px;font-weight:400;color:#1c1c2c;transform:scaleX(1.0405);'>Druck</div>
<div class='t' style='left:580.27px;top:103px;font-size:16.5px;line-height:16.5px;font-weight:400;color:#1c1c2c;transform:scaleX(0.9350);'>Informationen</div>
<div class='t' style='left:696.50px;top:103px;font-size:16.5px;line-height:16.5px;font-weight:400;color:#1c1c2c;transform:scaleX(0.9650);'>Zahlung</div>
<div class='t' style='left:765.40px;top:103px;font-size:16.5px;line-height:16.5px;font-weight:400;color:#8a8a8a;transform:scaleX(0.9763);'>Abrechnen</div>
<div class='t' style='left:580.50px;top:156px;font-size:13px;line-height:13px;font-weight:400;color:#2a2a2a;transform:scaleX(0.9349);'>Medien</div>
<div class='t' style='left:747.00px;top:156px;font-size:13px;line-height:13px;font-weight:400;color:#2a2a2a;transform:scaleX(0.9532);'>Zahlung</div>
<div class='t' style='left:935.79px;top:213px;font-size:16.5px;line-height:16.5px;font-weight:400;color:#73737a;transform:scaleX(1.0093);'>Bereit</div>
<div class='t' style='left:1361.10px;top:213px;font-size:16.5px;line-height:16.5px;font-weight:400;color:#73737a;transform:scaleX(0.9831);'>Abrechnung</div>
<div class='t' style='left:1797.40px;top:213px;font-size:16.5px;line-height:16.5px;font-weight:400;color:#73737a;transform:scaleX(0.9759);'>Abgeschlossen</div>
<div class='t' style='left:629.10px;top:270px;font-size:20px;line-height:20px;font-weight:700;color:#1a1a1a;transform:scaleX(1.0181);'>Verordnet am</div>
<div class='t' style='left:1247.40px;top:270px;font-size:20px;line-height:20px;font-weight:700;color:#1a1a1a;transform:scaleX(1.0433);'>Heilmittel</div>
<div class='t' style='left:630.40px;top:304px;font-size:14.5px;line-height:14.5px;font-weight:700;color:#1a1a1a;transform:scaleX(0.9730);'>Formular</div>
<div class='t' style='left:769.70px;top:304px;font-size:14.5px;line-height:14.5px;font-weight:700;color:#0a0ae8;transform:scaleX(1.0545);'>Neue Verordnung</div>
<div class='t' style='left:630.40px;top:332px;font-size:14.5px;line-height:14.5px;font-weight:700;color:#1a1a1a;transform:scaleX(0.9556);'>Gesamt</div>
<div class='t' style='left:769.70px;top:333px;font-size:13px;line-height:13px;font-weight:400;color:#1a1a1a;'>0,00 € (0,00 €)</div>
<div class='t' style='left:23.40px;top:471px;font-size:20px;line-height:20px;font-weight:700;color:#1a1a1a;'>Daten</div>
<div class='t' style='left:629.10px;top:471px;font-size:20px;line-height:20px;font-weight:700;color:#1a1a1a;transform:scaleX(1.0103);'>Optionen</div>
<div class='t' style='left:1247.20px;top:471px;font-size:20px;line-height:20px;font-weight:700;color:#1a1a1a;transform:scaleX(1.0276);'>Termine</div>
<div class='t' style='left:1311.50px;top:503px;font-size:13px;line-height:13px;font-weight:400;color:#7c7c84;transform:scaleX(0.9275);'>Beginn</div>
<div class='t' style='left:1462.20px;top:503px;font-size:13px;line-height:13px;font-weight:400;color:#7c7c84;transform:scaleX(0.9767);'>Therapeut</div>
<div class='t' style='left:1611.20px;top:503px;font-size:13px;line-height:13px;font-weight:400;color:#7c7c84;transform:scaleX(0.9377);'>Positionen</div>
<div class='t' style='left:1760.30px;top:503px;font-size:13px;line-height:13px;font-weight:400;color:#7c7c84;transform:scaleX(0.9730);'>Status</div>
<div class='t' style='left:20.00px;top:915px;font-size:13px;line-height:13px;font-weight:700;color:#000000;transform:scaleX(1.0243);'>Validierung</div>
<div class='t' style='left:106.30px;top:915px;font-size:13px;line-height:13px;font-weight:700;color:#000000;transform:scaleX(1.0102);'>Historie</div>
<div class='t' style='left:169.70px;top:915px;font-size:13px;line-height:13px;font-weight:700;color:#000000;transform:scaleX(1.0302);'>Preisberechnung</div>
<div class='t' style='left:293.30px;top:915px;font-size:13px;line-height:13px;font-weight:700;color:#000000;transform:scaleX(1.0378);'>Absetzungen</div>
<div class='t' style='left:393.10px;top:915px;font-size:13px;line-height:13px;font-weight:700;color:#000000;transform:scaleX(1.0063);'>Rechnungen</div>
<div class='t' style='left:474.68px;top:213px;font-size:16.5px;line-height:16.5px;font-weight:400;color:#73737a;transform:scaleX(1.0093);'>Plausibel</div>
<!-- dropdown menu -->
<div class="a" style="left:4px;top:148px;width:511px;height:257px;background:#ffffff;border:1px solid #b2b2b2;border-radius:4px;box-shadow:1px 6px 10px rgba(0,0,0,0.13)"></div>
<div class="a" style="left:6px;top:250px;width:507px;height:50px;background:#dce8f9"></div>
<div class="a" style="left:62px;top:351px;width:451px;height:1px;background:#e2e2e2"></div>
<svg style="left:0;top:0" width="600" height="420">
<defs>
 <linearGradient id="gPage" x1="0" y1="0" x2="1" y2="1"><stop offset="0" stop-color="#ffffff"/><stop offset="1" stop-color="#dfe5f2"/></linearGradient>
 <linearGradient id="gGreenR" x1="0" y1="0" x2="1" y2="1"><stop offset="0" stop-color="#c4ec86"/><stop offset="1" stop-color="#64a626"/></linearGradient><linearGradient id="gGreen" x1="0" y1="0" x2="0" y2="1"><stop offset="0" stop-color="#a8d86a"/><stop offset="1" stop-color="#5c9e2c"/></linearGradient>
 <linearGradient id="gFolderB" x1="0" y1="0" x2="0" y2="1"><stop offset="0" stop-color="#fbe29a"/><stop offset="1" stop-color="#e9ad45"/></linearGradient>
 <linearGradient id="gFolderF" x1="0" y1="0" x2="0" y2="1"><stop offset="0" stop-color="#fde7a8"/><stop offset="1" stop-color="#eaa63e"/></linearGradient>
 <linearGradient id="gFloppy" x1="0" y1="0" x2="1" y2="1"><stop offset="0" stop-color="#6a7690"/><stop offset="1" stop-color="#39435a"/></linearGradient>
 <linearGradient id="gBlueArr" x1="0" y1="0" x2="0" y2="1"><stop offset="0" stop-color="#d8effc"/><stop offset="1" stop-color="#5f9fdc"/></linearGradient>
 <linearGradient id="gTrash" x1="0" y1="0" x2="1" y2="0"><stop offset="0" stop-color="#7c8aa8"/><stop offset="0.5" stop-color="#a8b4c8"/><stop offset="1" stop-color="#6a7894"/></linearGradient>
 <radialGradient id="gStar" cx="0.5" cy="0.5" r="0.5"><stop offset="0" stop-color="#fff3b0"/><stop offset="1" stop-color="#f0a830"/></radialGradient>
 <radialGradient id="gGlow" cx="0.5" cy="0.5" r="0.5"><stop offset="0" stop-color="#fff7c0" stop-opacity="0.9"/><stop offset="1" stop-color="#fff7c0" stop-opacity="0"/></radialGradient>
 <linearGradient id="gSkin" x1="0" y1="0" x2="0" y2="1"><stop offset="0" stop-color="#f6d09a"/><stop offset="1" stop-color="#d9a060"/></linearGradient>
 <linearGradient id="gPrinter" x1="0" y1="0" x2="0" y2="1"><stop offset="0" stop-color="#ffffff"/><stop offset="1" stop-color="#c6d0e4"/></linearGradient>
 <linearGradient id="gNote" x1="0" y1="0" x2="1" y2="1"><stop offset="0" stop-color="#fbe08a"/><stop offset="1" stop-color="#e9b248"/></linearGradient>
 <radialGradient id="gEuro" cx="0.4" cy="0.35" r="0.65"><stop offset="0" stop-color="#fbd890"/><stop offset="1" stop-color="#d98a2e"/></radialGradient>
 <radialGradient id="gDollar" cx="0.4" cy="0.35" r="0.65"><stop offset="0" stop-color="#b8e078"/><stop offset="1" stop-color="#5a9a2a"/></radialGradient>
 <linearGradient id="gInbox" x1="0" y1="0" x2="0" y2="1"><stop offset="0" stop-color="#e8e8e8"/><stop offset="1" stop-color="#c4c4c4"/></linearGradient>
 <radialGradient id="gRed" cx="0.4" cy="0.35" r="0.65"><stop offset="0" stop-color="#f46050"/><stop offset="1" stop-color="#c01818"/></radialGradient>
 <radialGradient id="gGrayBtn" cx="0.4" cy="0.35" r="0.65"><stop offset="0" stop-color="#c8c8c8"/><stop offset="1" stop-color="#a2a2a2"/></radialGradient><radialGradient id="gGrayBtnL" cx="0.4" cy="0.35" r="0.65"><stop offset="0" stop-color="#dedede"/><stop offset="1" stop-color="#b8b8b8"/></radialGradient>
 <radialGradient id="gInfo" cx="0.4" cy="0.3" r="0.7"><stop offset="0" stop-color="#9cc8f4"/><stop offset="1" stop-color="#2a62b8"/></radialGradient>
 <linearGradient id="gBoard" x1="0" y1="0" x2="0" y2="1"><stop offset="0" stop-color="#6c7a98"/><stop offset="0.5" stop-color="#3e486a"/><stop offset="1" stop-color="#262e4e"/></linearGradient>
 <linearGradient id="gPerson" x1="0" y1="0" x2="0" y2="1"><stop offset="0" stop-color="#f8d890"/><stop offset="1" stop-color="#c87a18"/></linearGradient>
</defs><path d="M17.1,156.5 L34.6,156.5 L43.1,165.0 L43.1,189.5 L17.1,189.5Z" fill="url(#gPage)" stroke="#6f82b2" stroke-width="1.20"/><path d="M34.6,156.5 L34.6,165.0 L43.1,165.0" fill="#ffffff" stroke="#6f82b2" stroke-width="1.20"/><circle cx="39.4" cy="182" r="9.4" fill="url(#gGreen)" stroke="#4e8a24" stroke-width="1"/><path d="M37.614,176.736 h3.572 v3.478000000000001 h3.478000000000001 v3.572 h-3.478000000000001 v3.478000000000001 h-3.572 v-3.478000000000001 h-3.478000000000001 v-3.572 h3.478000000000001Z" fill="#ffffff" stroke="#3f6e1e" stroke-width="0.8"/><path d="M24.3,206.0 L39.8,206.0 L47.3,213.5 L47.3,236.0 L24.3,236.0Z" fill="url(#gPage)" stroke="#7284b4" stroke-width="1.2"/><path d="M39.8,206.0 L39.8,213.5 L47.3,213.5" fill="#fff" stroke="#7284b4" stroke-width="1.2"/><path d="M17.3,211.0 L32.8,211.0 L40.3,218.5 L40.3,241.0 L17.3,241.0Z" fill="url(#gPage)" stroke="#7284b4" stroke-width="1.2"/><path d="M32.8,211.0 L32.8,218.5 L40.3,218.5" fill="#fff" stroke="#7284b4" stroke-width="1.2"/><path d="M24.3,256.5 L39.8,256.5 L47.3,264.0 L47.3,286.5 L24.3,286.5Z" fill="url(#gPage)" stroke="#7284b4" stroke-width="1.2"/><path d="M39.8,256.5 L39.8,264.0 L47.3,264.0" fill="#fff" stroke="#7284b4" stroke-width="1.2"/><path d="M17.3,261.5 L32.8,261.5 L40.3,269.0 L40.3,291.5 L17.3,291.5Z" fill="url(#gPage)" stroke="#7284b4" stroke-width="1.2"/><path d="M32.8,261.5 L32.8,269.0 L40.3,269.0" fill="#fff" stroke="#7284b4" stroke-width="1.2"/><linearGradient id="gScan" x1="0" y1="0" x2="1" y2="1"><stop offset="0" stop-color="#f8fafd"/><stop offset="1" stop-color="#e2e8f2"/></linearGradient><rect x="12.5" y="305.5" width="39" height="39" rx="2" fill="url(#gScan)" stroke="#98a8c4" stroke-width="1"/><rect x="21" y="311.5" width="18" height="25" fill="#f6f9fd" stroke="#7ea8de" stroke-width="1"/><path d="M25.5,318 h8.5 M25.5,320.5 h8.5 M25.5,323 h8.5 M25.5,325.5 h8 M25.5,328 h6" stroke="#78a6de" stroke-width="0.9"/><rect x="28.5" y="327.5" width="16.8" height="10.5" rx="1.5" fill="#f4f6fa" stroke="#70809c" stroke-width="1.1"/><rect x="32" y="322.8" width="9.6" height="8.5" fill="#ffffff" stroke="#3a7ad0" stroke-width="1"/><rect x="31" y="330.3" width="11.8" height="2.6" fill="#2f72c8"/><rect x="32.4" y="335.5" width="9.4" height="4" fill="#ffffff" stroke="#4a86d4" stroke-width="0.9"/><linearGradient id="gFrame" x1="0" y1="0" x2="0" y2="1"><stop offset="0" stop-color="#fcf0c0"/><stop offset="1" stop-color="#f4c458"/></linearGradient><rect x="13.5" y="363.3" width="35.8" height="29.4" rx="2" fill="url(#gFrame)" stroke="#d08838" stroke-width="1.1"/><rect x="17" y="367" width="28" height="22" fill="url(#gBoard)" stroke="#1c2448" stroke-width="0.6"/><rect x="22" y="385.8" width="7.7" height="3.2" fill="#f8f8f8" stroke="#202020" stroke-width="0.6"/></svg>
<div class='t' style='left:65.40px;top:169px;font-size:15.8px;line-height:15.8px;font-weight:400;color:#1c1c2c;transform:scaleX(0.9347);text-rendering:geometricPrecision;'>Neue Verordnung</div>
<div class='t' style='left:434.70px;top:169px;font-size:15.8px;line-height:15.8px;font-weight:400;color:#1c1c2c;transform:scaleX(0.9551);text-rendering:geometricPrecision;'>Strg+N</div>
<div class='t' style='left:65.40px;top:219px;font-size:15.8px;line-height:15.8px;font-weight:400;color:#1c1c2c;transform:scaleX(0.9493);text-rendering:geometricPrecision;'>Kopie der aktuellen Verordnung</div>
<div class='t' style='left:333.50px;top:219px;font-size:15.8px;line-height:15.8px;font-weight:400;color:#1c1c2c;transform:scaleX(0.9308);text-rendering:geometricPrecision;'>Strg+Umschalttaste+C</div>
<div class='t' style='left:65.40px;top:269px;font-size:15.8px;line-height:15.8px;font-weight:400;color:#1c1c2c;transform:scaleX(0.9344);text-rendering:geometricPrecision;'>Neue Verordnung aus Vorlage</div>
<div class='t' style='left:327.40px;top:269px;font-size:15.8px;line-height:15.8px;font-weight:400;color:#1c1c2c;transform:scaleX(0.9277);text-rendering:geometricPrecision;'>Strg+Umschalttaste+F5</div>
<div class='t' style='left:65.40px;top:319px;font-size:15.8px;line-height:15.8px;font-weight:400;color:#1c1c2c;transform:scaleX(0.9275);text-rendering:geometricPrecision;'>Neue Verordnung + Scan</div>
<div class='t' style='left:463.73px;top:319px;font-size:15.8px;line-height:15.8px;font-weight:400;color:#1c1c2c;transform:scaleX(0.9300);text-rendering:geometricPrecision;'>F8</div>
<div class='t' style='left:65.40px;top:372px;font-size:15.8px;line-height:15.8px;font-weight:400;color:#1c1c2c;transform:scaleX(0.9211);text-rendering:geometricPrecision;'>Generator</div>
<div class='t' style='left:298.30px;top:372px;font-size:15.8px;line-height:15.8px;font-weight:400;color:#1c1c2c;transform:scaleX(0.9438);text-rendering:geometricPrecision;'>Strg+Umschalttaste+Alt+F5</div>
</body></html>
